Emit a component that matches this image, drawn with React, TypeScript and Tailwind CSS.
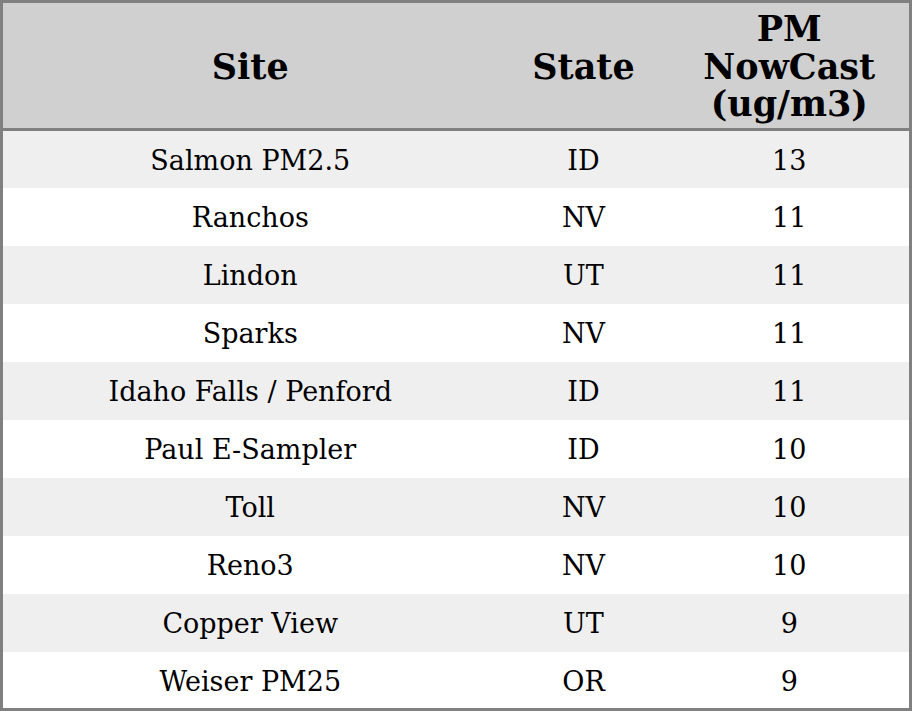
const rows = [
  { site: 'Salmon PM2.5', state: 'ID', pm: 13 },
  { site: 'Ranchos', state: 'NV', pm: 11 },
  { site: 'Lindon', state: 'UT', pm: 11 },
  { site: 'Sparks', state: 'NV', pm: 11 },
  { site: 'Idaho Falls / Penford', state: 'ID', pm: 11 },
  { site: 'Paul E-Sampler', state: 'ID', pm: 10 },
  { site: 'Toll', state: 'NV', pm: 10 },
  { site: 'Reno3', state: 'NV', pm: 10 },
  { site: 'Copper View', state: 'UT', pm: 9 },
  { site: 'Weiser PM25', state: 'OR', pm: 9 },
]

export default function App() {
  return (
    <div className="w-[912px] h-[711px] bg-white font-['DejaVu_Serif',serif] text-black">
      <table className="w-full table-fixed border-[3px] border-[#808080] border-collapse">
        <colgroup>
          <col className="w-[496px]" />
          <col className="w-[172px]" />
          <col />
        </colgroup>
        <thead>
          <tr className="bg-[#d0d0d0] h-[128px] border-b-[3px] border-[#808080]">
            <th className="text-[35px] leading-[37.5px] font-bold pt-[2px]">Site</th>
            <th className="text-[35px] leading-[37.5px] font-bold pt-[2px]">State</th>
            <th className="text-[35px] leading-[37.5px] font-bold px-2 pt-[2px]">PM NowCast (ug/m3)</th>
          </tr>
        </thead>
        <tbody>
          {rows.map((r, i) => (
            <tr key={r.site} className={`h-[58px] text-[27px] ${i % 2 === 0 ? 'bg-[#efefef]' : 'bg-white'}`}>
              <td className="text-center pt-[4px]">{r.site}</td>
              <td className="text-center pt-[4px]">{r.state}</td>
              <td className="text-center pt-[4px]">{r.pm}</td>
            </tr>
          ))}
        </tbody>
      </table>
    </div>
  )
}
